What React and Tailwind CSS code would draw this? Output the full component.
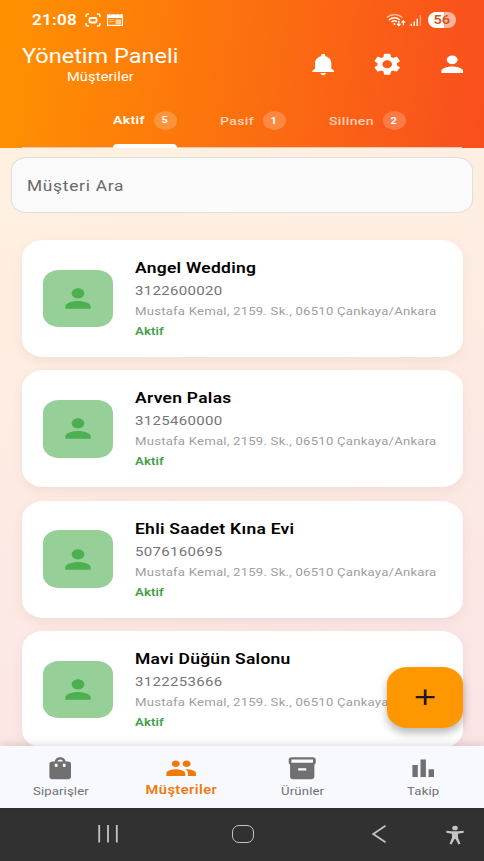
import React from "react";

const PERSON =
  "M12 12c2.21 0 4-1.79 4-4s-1.79-4-4-4-4 1.79-4 4 1.79 4 4 4zm0 2c-2.67 0-8 1.34-8 4v2h16v-2c0-2.66-5.33-4-8-4z";
const BELL =
  "M12 22c1.1 0 2-.9 2-2h-4c0 1.1.89 2 2 2zm6-6v-5c0-3.07-1.64-5.64-4.5-6.32V4c0-.83-.67-1.5-1.5-1.5s-1.5.67-1.5 1.5v.68C7.63 5.36 6 7.92 6 11v5l-2 2v1h16v-1l-2-2z";
const GEAR =
  "M19.14 12.94c.04-.3.06-.61.06-.94 0-.32-.02-.64-.07-.94l2.03-1.58c.18-.14.23-.41.12-.61l-1.92-3.32c-.12-.22-.37-.29-.59-.22l-2.39.96c-.5-.38-1.03-.7-1.62-.94l-.36-2.54c-.04-.24-.24-.41-.48-.41h-3.84c-.24 0-.43.17-.47.41l-.36 2.54c-.59.24-1.13.57-1.62.94l-2.39-.96c-.22-.08-.47 0-.59.22L2.74 8.87c-.12.21-.08.47.12.61l2.03 1.58c-.05.3-.09.63-.09.94s.02.64.07.94l-2.03 1.58c-.18.14-.23.41-.12.61l1.92 3.32c.12.22.37.29.59.22l2.39-.96c.5.38 1.03.7 1.62.94l.36 2.54c.05.24.24.41.48.41h3.84c.24 0 .44-.17.47-.41l.36-2.54c.59-.24 1.13-.56 1.62-.94l2.39.96c.22.08.47 0 .59-.22l1.92-3.32c.12-.22.07-.47-.12-.61l-2.01-1.58zM12 15.6c-1.98 0-3.6-1.62-3.6-3.6s1.62-3.6 3.6-3.6 3.6 1.62 3.6 3.6-1.62 3.6-3.6 3.6z";
const BAG =
  "M18 6h-2c0-2.21-1.79-4-4-4S8 3.79 8 6H6c-1.1 0-2 .9-2 2v12c0 1.1.9 2 2 2h12c1.1 0 2-.9 2-2V8c0-1.1-.9-2-2-2zm-8 4c0 .55-.45 1-1 1s-1-.45-1-1V8h2v2zm2-6c1.1 0 2 .9 2 2h-4c0-1.1.9-2 2-2zm4 6c0 .55-.45 1-1 1s-1-.45-1-1V8h2v2z";
const GROUP =
  "M16 11c1.66 0 2.99-1.34 2.99-3S17.66 5 16 5c-1.66 0-3 1.34-3 3s1.34 3 3 3zm-8 0c1.66 0 2.99-1.34 2.99-3S9.66 5 8 5C6.34 5 5 6.34 5 8s1.34 3 3 3zm0 2c-2.33 0-7 1.17-7 3.5V19h14v-2.5c0-2.33-4.67-3.5-7-3.5zm8 0c-.29 0-.62.02-.97.05 1.16.84 1.97 1.97 1.97 3.45V19h6v-2.5c0-2.33-4.67-3.5-7-3.5z";
const BOX =
  "M20 2H4c-1 0-2 .9-2 2v3.01c0 .72.43 1.34 1 1.69V20c0 1.1 1.1 2 2 2h14c.9 0 2-.9 2-2V8.7c.57-.35 1-.97 1-1.69V4c0-1.1-1-2-2-2zm-5 12H9v-2h6v2zm5-7H4V4l16-.02V7z";
const BARS = "M4 9h4v11H4zM16 13h4v7h-4zM10 4h4v16h-4z";

function Icon({ d, className }) {
  return (
    <svg viewBox="0 0 24 24" preserveAspectRatio="none" fill="currentColor" className={className}>
      <path d={d} />
    </svg>
  );
}

/* Wide-set text: glyphs are stretched horizontally from their left edge. */
function Wide({ children, className }) {
  return <span className={`block w-max origin-left scale-x-[1.22] whitespace-nowrap ${className}`}>{children}</span>;
}

/* Same stretch, growing from the middle so that it stays centred. */
function WideCenter({ children, className }) {
  return <span className={`block w-max origin-center scale-x-[1.22] whitespace-nowrap ${className}`}>{children}</span>;
}

function StatusBar() {
  return (
    <div className="flex h-[40px] items-center pl-8 pr-7 text-white">
      <div className="w-[53px]">
        <Wide className="text-[14px] leading-5 font-semibold tracking-[0.2px]">21:08</Wide>
      </div>
      <svg viewBox="0 0 16 14" className="h-[14px] w-4" fill="none" stroke="white" strokeWidth="1.4">
        <path d="M4 1H3Q1 1 1 3v1M12 1h1q2 0 2 2v1M1 10v1q0 2 2 2h1M15 10v1q0 2-2 2h-1" />
        <rect x="4.5" y="5" width="7" height="4.5" rx="1" strokeWidth="1.8" />
      </svg>
      <svg viewBox="0 0 16 12" className="ml-[6px] h-[12px] w-4">
        <path d="M.6 1v10.4h14.8V1" fill="none" stroke="white" strokeWidth="1.1" />
        <path d="M0 .6h1.5l1-.6 1 .6h2l1-.6 1 .6h2l1-.6 1 .6h2l1-.6L16 .6V4H0z" fill="white" />
        <path d="M2 5.6h5.5M2 7.5h5.5" stroke="white" strokeOpacity=".5" />
        <path d="M8.6 5.3h5.4v5H8.6z" fill="white" fillOpacity=".65" />
      </svg>
      <div className="ml-auto flex items-center">
        <svg viewBox="0 0 20 14" className="h-[14px] w-5" fill="none" stroke="white">
          <path d="M.8 4.600Q8.500-1.600 16.500 4.600" strokeWidth="1.3" strokeOpacity=".6" />
          <path d="M3 6.900Q8.500 2.600 14 6.900M5.500 9Q8.500 6.600 11 8.800" strokeWidth="1.3" />
          <circle cx="8.400" cy="11" r="1" fill="white" stroke="none" />
          <path d="M12.800 8v4.600M11 10.800l1.800 1.900 1.800-1.900M17.300 12.500V8M15.500 9.700l1.800-1.900 1.800 1.900" strokeWidth="1.200" />
        </svg>
        <svg viewBox="0 0 12 12" className="ml-[4px] h-[11px] w-3" fill="white">
          <path d="M0 9.500h1.500V12H0zM3.300 7h1.500v5H3.300zM6.600 4h1.500v8H6.600z" />
          <path d="M10 0h1.500v12H10z" fillOpacity=".45" />
        </svg>
        <div className="ml-[6px] flex h-4 w-7 items-center justify-center rounded-full bg-[linear-gradient(90deg,#fff_56%,#f9b49a_56%)] text-[#d9531f]">
          <WideCenter className="text-[12px] leading-4 font-semibold">56</WideCenter>
        </div>
      </div>
    </div>
  );
}

function Tab({ label, count, active, className }) {
  return (
    <div className={`flex h-full items-center justify-between ${active ? "text-white" : "text-white/70"} ${className}`}>
      <Wide className={`text-[11.5px] leading-4 tracking-[0.3px] ${active ? "font-semibold" : "font-medium"}`}>{label}</Wide>
      <span className="flex h-[19px] w-[23px] items-center justify-center rounded-[50%] bg-white/20 text-white">
        <WideCenter className="text-[9px] leading-4 font-bold">{count}</WideCenter>
      </span>
    </div>
  );
}

function Header() {
  return (
    <header className="h-[148px] bg-[linear-gradient(97deg,#ff9200_0%,#f94e1e_100%)]">
      <StatusBar />
      <div className="flex h-[49px] items-center">
        <div className="ml-[22px] flex w-[157px] flex-col items-center pt-[1px] text-white">
          <WideCenter className="text-[19.3px] leading-6">Yönetim Paneli</WideCenter>
          <WideCenter className="text-[12px] leading-4 tracking-[0.1px]">Müşteriler</WideCenter>
        </div>
        <div className="ml-auto flex">
          {[BELL, GEAR, PERSON].map((d, i) => (
            <button key={i} className="flex w-[64.500px] justify-center text-white">
              <Icon d={d} className="h-[26.4px] w-[32.4px]" />
            </button>
          ))}
        </div>
      </div>
      <nav className="mx-[22px] flex h-[59px] border-b border-[#f3c5ae] pl-[91px]">
        <div className="flex h-[59px] w-[63.500px] flex-col">
          <Tab label="Aktif" count="5" active className="h-[56px] pt-[7px]" />
          <div className="h-[4px] shrink-0 rounded-t-[4px] bg-white" />
        </div>
        <Tab label="Pasif" count="1" className="ml-[43px] w-[66px] pt-[5px]" />
        <Tab label="Silinen" count="2" className="ml-[43px] w-[77px] pt-[5px]" />
      </nav>
    </header>
  );
}

function CustomerCard({ name, phone }) {
  return (
    <article className="flex h-[117px] shrink-0 items-center rounded-[22px/18px] bg-white px-[21px] shadow-[0_4px_12px_rgba(120,50,20,0.07)]">
      <div className="flex h-[57.500px] w-[70.500px] shrink-0 items-center justify-center rounded-[16px/13px] bg-[#96cf98] text-[#4caf50]">
        <Icon d={PERSON} className="h-[31px] w-[38px]" />
      </div>
      <div className="ml-[22px] min-w-0 flex-1 pt-[2px]">
        <Wide className="text-[14.300px] leading-[22px] font-semibold tracking-[0.23px] text-black">{name}</Wide>
        <Wide className="mt-[1px] text-[12.300px] leading-[22px] tracking-[0.25px] text-[#757575]">{phone}</Wide>
        <Wide className="text-[10.800px] leading-[20px] tracking-[0.17px] text-[#9e9e9e]">
          Mustafa Kemal, 2159. Sk., 06510 Çankaya/Ankara
        </Wide>
        <Wide className="text-[10.800px] leading-[20px] font-semibold tracking-[0.1px] text-[#43a047]">Aktif</Wide>
      </div>
    </article>
  );
}

const CUSTOMERS = [
  { name: "Angel Wedding", phone: "3122600020" },
  { name: "Arven Palas", phone: "3125460000" },
  { name: "Ehli Saadet Kına Evi", phone: "5076160695" },
  { name: "Mavi Düğün Salonu", phone: "3122253666" },
];

function NavItem({ d, label, active }) {
  return (
    <div className={`flex flex-1 flex-col items-center pt-[9px] ${active ? "text-[#ef7a0a]" : "text-[#707070]"}`}>
      <Icon d={d} className="h-[26.4px] w-[32.4px]" />
      <WideCenter
        className={active ? "text-[12px] leading-[18px] font-semibold tracking-[0.35px]" : "mt-[1.500px] text-[10.800px] leading-[18px] tracking-[0.1px]"}
      >
        {label}
      </WideCenter>
    </div>
  );
}

function SystemBar() {
  return (
    <div className="flex h-[53px] items-center bg-[#313131] pl-[98px] text-[#c4c4c4]">
      <svg viewBox="0 0 20 18" className="-mt-[2px] h-[18px] w-5" stroke="currentColor" strokeWidth="1.8">
        <path d="M1.200 0v17.500M10 0v17.500M18.800 0v17.500" />
      </svg>
      <div className="-mt-[2px] ml-[114px] h-[18px] w-[22px] rounded-[7px] border-[1.5px] border-current" />
      <svg viewBox="0 0 14 18" className="-mt-[2px] ml-[118px] h-[18px] w-[14px]" fill="none" stroke="currentColor" strokeWidth="1.700">
        <path d="M13.500.700L1.200 9l12.300 8.300" />
      </svg>
      <svg viewBox="0 0 18 20" className="ml-[60px] h-5 w-[18px]" fill="currentColor">
        <ellipse cx="9" cy="3" rx="2.800" ry="2.300" />
        <path d="M.3 5.800L6 6.300h6l5.700-.5v2L12 8.700v3.800l2.400 6.200-1.900.7L9.500 14h-1l-3 5.400-1.900-.7L6 12.500V8.700L.3 7.800z" />
      </svg>
    </div>
  );
}

export default function App() {
  return (
    <div className="relative flex h-[861px] w-[484px] flex-col overflow-hidden font-[Roboto,sans-serif]">
      <Header />
      <main className="flex h-[598px] flex-col overflow-hidden bg-[linear-gradient(165deg,#fff1e0_0%,#fbe4e6_100%)]">
        <div className="mx-[11px] mt-[9px] flex h-[56px] shrink-0 items-center rounded-[16px/13px] border-[1.5px] border-[#dedede] bg-[#fafafa] pt-[2px] pl-[15px]">
          <Wide className="text-[14.200px] leading-5 tracking-[0.600px] text-[#686868]">Müşteri Ara</Wide>
        </div>
        <div className="mt-[27px] flex flex-col gap-[13.300px] px-[21.500px]">
          {CUSTOMERS.map((c) => (
            <CustomerCard key={c.phone} {...c} />
          ))}
        </div>
      </main>
      <nav className="z-10 flex h-[62px] bg-[#f8f9ff] shadow-[0_-2px_8px_rgba(0,0,0,0.12)]">
        <NavItem d={BAG} label="Siparişler" />
        <NavItem d={GROUP} label="Müşteriler" active />
        <NavItem d={BOX} label="Ürünler" />
        <NavItem d={BARS} label="Takip" />
      </nav>
      <SystemBar />
      <button className="absolute top-[667px] left-[387px] z-20 flex h-[61px] w-[75.500px] items-center justify-center rounded-[21px/17px] bg-[#ff9800] shadow-[0_5px_8px_rgba(0,0,0,0.28)]">
        <Icon d="M19 13h-6v6h-2v-6H5v-2h6V5h2v6h6v2z" className="h-[26.4px] w-[32.4px] text-[#1d1b20]" />
      </button>
    </div>
  );
}
